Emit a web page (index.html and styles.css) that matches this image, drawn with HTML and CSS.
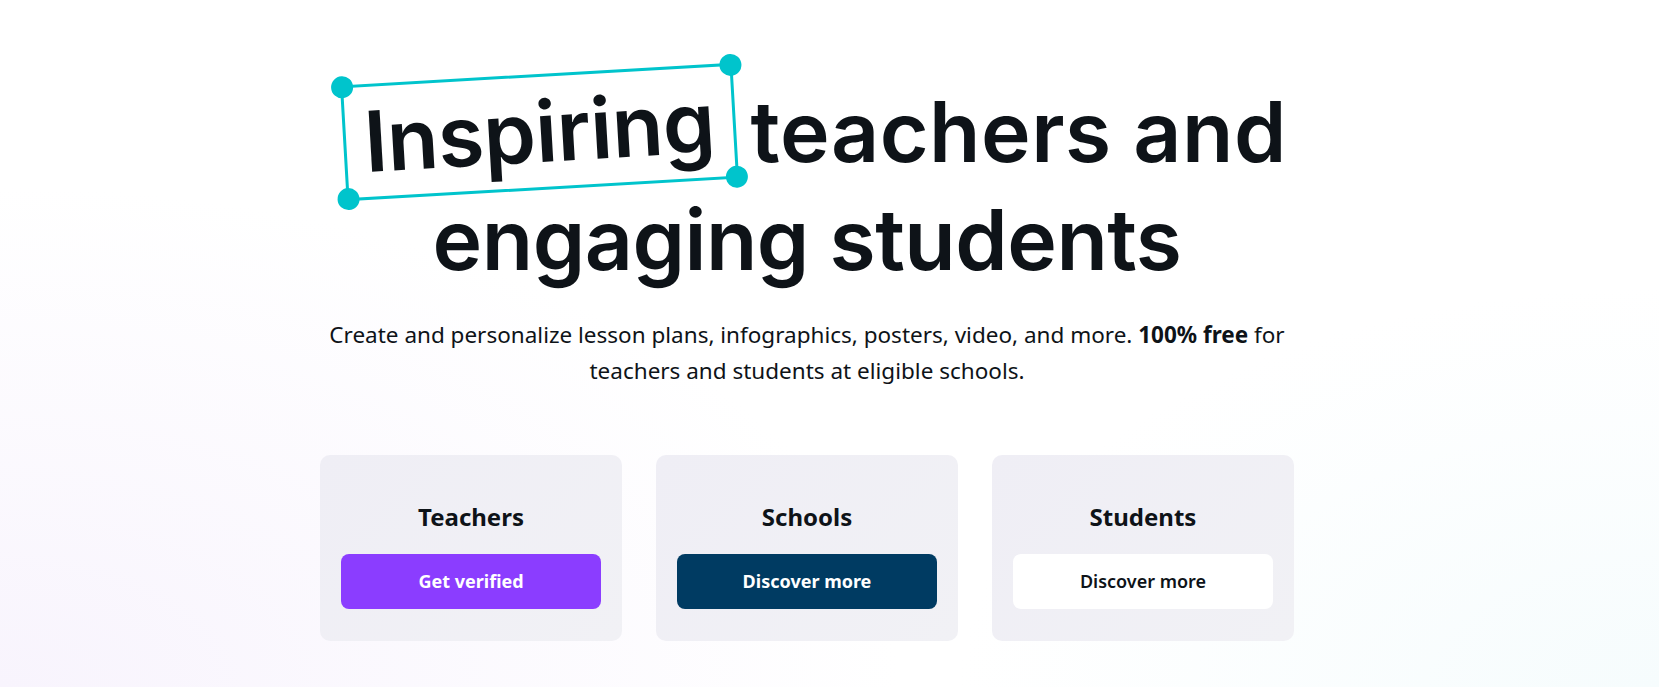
FILE: index.html
```html
<!DOCTYPE html>
<html lang="en">
  <head>
    <meta charset="UTF-8" />
    <meta name="viewport" content="width=device-width, initial-scale=1.0" />
    <title>Canva for Education</title>
    <link rel="stylesheet" href="styles.css">
  </head>
  <body>
    <main class="hero">
      <h1 class="hero_title">
        <span class="select_box">
          Inspiring
          <i class="dot dot_tl"></i>
          <i class="dot dot_tr"></i>
          <i class="dot dot_br"></i>
          <i class="dot dot_bl"></i>
        </span>
        <span class="title_rest">teachers and</span><br />engaging students
      </h1>
      <p class="hero_desc">
        Create and personalize lesson plans, infographics, posters, video, and more.
        <b>100% free</b> for teachers and students at eligible schools.
      </p>
      <section class="cards">
        <div class="card">
          <h3 class="card_title">Teachers</h3>
          <a href="#" class="card_btn btn_purple">Get verified</a>
        </div>
        <div class="card">
          <h3 class="card_title">Schools</h3>
          <a href="#" class="card_btn btn_navy">Discover more</a>
        </div>
        <div class="card">
          <h3 class="card_title">Students</h3>
          <a href="#" class="card_btn btn_white">Discover more</a>
        </div>
      </section>
    </main>
  </body>
</html>
```

FILE: styles.css
```css
* {
  margin: 0;
  padding: 0;
  box-sizing: border-box;
  text-decoration: none;
  color: inherit;
}

body {
  min-height: 100vh;
  padding-right: 45px;
  font-family: 'Noto Sans', sans-serif;
  color: #0e1318;
  background:
    radial-gradient(ellipse 900px 500px at 0% 100%, #f8f4fd, rgba(248, 244, 253, 0)),
    radial-gradient(ellipse 700px 400px at 100% 100%, #f6fcfd, rgba(246, 252, 253, 0)),
    #ffffff;
}

.hero {
  width: 974px;
  margin: 0 auto;
  padding-top: 74px;
  text-align: center;
}

.hero_title {
  font-family: Inter, sans-serif;
  font-size: 84px;
  font-weight: 600;
  line-height: 100px;
  letter-spacing: -0.5px;
}

.title_rest {
  letter-spacing: 0.5px;
}

.select_box {
  position: relative;
  display: inline-block;
  padding: 0 18px;
  line-height: 110px;
  border: 3px solid #00c4cc;
  transform: rotate(-3.3deg);
  margin: 0 -6px 0 16px;
}

.dot {
  position: absolute;
  width: 22px;
  height: 22px;
  border-radius: 50%;
  background-color: #00c4cc;
}
.dot_tl { top: -12px; left: -12px; }
.dot_tr { top: -12px; right: -12px; }
.dot_br { bottom: -12px; right: -12px; }
.dot_bl { bottom: -12px; left: -12px; }

.hero_desc {
  margin-top: 27px;
  font-size: 22.5px;
  line-height: 36px;
}

.hero_desc b {
  font-weight: 700;
}

.cards {
  display: grid;
  grid-template-columns: repeat(3, 1fr);
  gap: 34px;
  margin-top: 66px;
}

.card {
  padding: 46px 21px 32px;
  border-radius: 10px;
  background: linear-gradient(135deg, #efeef5, #f1f1f5);
}

.card_title {
  font-size: 24px;
  font-weight: 700;
  line-height: 32px;
  margin-bottom: 21px;
}

.card_btn {
  display: block;
  height: 55px;
  line-height: 55px;
  border-radius: 8px;
  font-size: 18px;
  font-weight: 700;
}

.btn_purple {
  background-color: #8b3dff;
  color: #ffffff;
}
.btn_navy {
  background-color: #003b62;
  color: #ffffff;
}
.btn_white {
  background-color: #ffffff;
  font-weight: 600;
}
```
